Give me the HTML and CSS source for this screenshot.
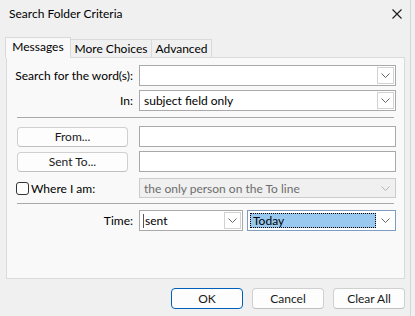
FILE: index.html
```html
<!DOCTYPE html>
<html>
<head>
<meta charset="utf-8">
<link rel="stylesheet" href="styles.css">
</head>
<body>
<div class="window">
  <div class="titlebar">
    <span class="title">Search Folder Criteria</span>
    <svg class="close" width="10" height="10" viewBox="0 0 10 10"><path d="M0.5 0.5 L9.5 9.5 M9.5 0.5 L0.5 9.5" stroke="#1a1a1a" stroke-width="1.1" fill="none"/></svg>
  </div>
  <div class="tabs">
    <div class="tab active t-msg">Messages</div>
    <div class="tab t-more">More Choices</div>
    <div class="tab t-adv">Advanced</div>
  </div>
  <div class="panel">
    <div class="row r-search">
      <span class="lbl">Search for the word(s):</span>
      <div class="combo"><span class="val"></span><span class="dd"><svg width="9" height="5" viewBox="0 0 9 5"><path d="M0.5 0.5 L4.5 4.5 L8.5 0.5" stroke="#666" fill="none"/></svg></span></div>
    </div>
    <div class="row r-in">
      <span class="lbl">In:</span>
      <div class="combo"><span class="val">subject field only</span><span class="dd"><svg width="9" height="5" viewBox="0 0 9 5"><path d="M0.5 0.5 L4.5 4.5 L8.5 0.5" stroke="#666" fill="none"/></svg></span></div>
    </div>
    <div class="sep s1"></div>
    <div class="row r-from">
      <span class="btn-cell"><span class="btn small">From...</span></span>
      <div class="textbox"></div>
    </div>
    <div class="row r-sent">
      <span class="btn-cell"><span class="btn small">Sent To...</span></span>
      <div class="textbox"></div>
    </div>
    <div class="row r-where">
      <span class="chk-cell"><span class="chk"></span><span class="chk-lbl">Where I am:</span></span>
      <div class="combo disabled"><span class="val">the only person on the To line</span><span class="dd plain"><svg width="9" height="5" viewBox="0 0 9 5"><path d="M0.5 0.5 L4.5 4.5 L8.5 0.5" stroke="#b5b5b5" fill="none"/></svg></span></div>
    </div>
    <div class="sep s2"></div>
    <div class="row r-time">
      <span class="lbl">Time:</span>
      <div class="timefields">
        <div class="combo c-sent"><span class="val">sent</span><span class="dd"><svg width="9" height="5" viewBox="0 0 9 5"><path d="M0.5 0.5 L4.5 4.5 L8.5 0.5" stroke="#666" fill="none"/></svg></span></div>
        <div class="combo c-today focus"><span class="val"><span class="hl">Today</span></span><span class="dd plain"><svg width="9" height="5" viewBox="0 0 9 5"><path d="M0.5 0.5 L4.5 4.5 L8.5 0.5" stroke="#666" fill="none"/></svg></span></div>
      </div>
    </div>
  </div>
  <div class="buttons">
    <span class="btn big default">OK</span>
    <span class="btn big">Cancel</span>
    <span class="btn big">Clear All</span>
  </div>
</div>
</body>
</html>
```
FILE: styles.css
```css
* { box-sizing: border-box; }
html, body { margin: 0; padding: 0; background: #f0f0f0; }
body {
  width: 415px;
  height: 316px;
  overflow: hidden;
  font-family: Lato, "Noto Sans", sans-serif;
  font-size: 12px;
  color: #000;
}
.window {
  width: 411px;
  height: 316px;
  border-right: 1px solid #d6d6d6;
  display: flex;
  flex-direction: column;
}
.titlebar {
  height: 29px;
  display: flex;
  align-items: center;
  justify-content: space-between;
  padding: 0 8px 2px 9px;
}
.title { line-height: 16px; }
.close { margin-top: 1px; }
.tabs {
  height: 28px;
  display: flex;
  align-items: flex-end;
  padding-left: 5px;
}
.tab {
  height: 18px;
  border: 1px solid #dadada;
  border-bottom: none;
  background: #f0f0f0;
  display: flex;
  align-items: center;
  justify-content: center;
  line-height: 14px;
  padding-top: 1px;
  white-space: nowrap;
}
.tab + .tab { border-left: none; }
.tab.active {
  height: 21px;
  background: #f9f9f9;
  margin-bottom: -1px;
  position: relative;
  z-index: 1;
  padding-top: 0;
  padding-bottom: 3px;
}
.t-msg { width: 66px; }
.t-more { width: 81px; }
.t-adv { width: 60px; }
.panel {
  margin-left: 6px;
  width: 399px;
  height: 222px;
  border: 1px solid #dadada;
  background: #f9f9f9;
  padding: 7px 8px 0 10px;
  display: flex;
  flex-direction: column;
}
.row {
  display: grid;
  grid-template-columns: 116px 257px;
  column-gap: 6px;
  height: 21px;
  align-items: stretch;
}
.lbl {
  text-align: right;
  display: flex;
  align-items: center;
  justify-content: flex-end;
  white-space: nowrap;
}
.r-in { margin-top: 4px; }
.sep { height: 1px; background: #a9a9a9; width: 377px; }
.s1 { margin-top: 6px; }
.r-from { margin-top: 8px; }
.r-sent { margin-top: 4px; }
.r-where { margin-top: 6px; height: 20px; }
.s2 { margin-top: 5px; }
.r-time { margin-top: 6px; }

.combo {
  border: 1px solid #a9a9a9;
  background: #fff;
  display: flex;
  align-items: center;
  justify-content: space-between;
  padding: 0 1px 0 4px;
}
.val { white-space: nowrap; }
.dd {
  width: 17px;
  height: 17px;
  border: 1px solid #d2d2d2;
  display: flex;
  align-items: center;
  justify-content: center;
  background: #fff;
}
.dd.plain { border-color: transparent; background: transparent; }
.combo.disabled {
  background: #f0f0f0;
  border-color: #cccccc;
  color: #6d6d6d;
}
.textbox { border: 1px solid #a9a9a9; background: #fff; }

.btn-cell { display: flex; align-items: center; }
.btn {
  display: flex;
  align-items: center;
  justify-content: center;
  background: #fdfdfd;
  border: 1px solid #d0d0d0;
  border-bottom-color: #c0c0c0;
  border-radius: 4px;
  color: #1a1a1a;
  white-space: nowrap;
}
.btn.small { width: 111px; height: 20px; }

.chk-cell { display: flex; align-items: center; white-space: nowrap; }
.chk {
  width: 13px;
  height: 13px;
  border: 1px solid #333;
  border-radius: 3px;
  background: #fff;
  margin-left: -1px;
  margin-right: 2px;
}

.timefields {
  display: grid;
  grid-template-columns: 104px 149px;
  column-gap: 4px;
}
.c-sent { padding-left: 3px; }
.c-sent .val { border-left: 1px solid #555; padding-left: 1px; line-height: 14px; }
.c-today {
  border-color: #7e9cbf;
  background: #fff;
  padding: 0 1px 0 2px;
}
.c-today .val { flex: 1; height: 15px; display: flex; }
.hl {
  flex: 1;
  background: #99c9ef;
  border: 1px dotted #000;
  padding-left: 2px;
  line-height: 13px;
  margin-right: 1px;
}

.buttons {
  display: flex;
  justify-content: flex-end;
  gap: 9px;
  padding: 9px 5px 0 0;
}
.btn.big { width: 72px; height: 21px; }
.btn.default { border-color: #005fb8; border-bottom-color: #005fb8; }
```
